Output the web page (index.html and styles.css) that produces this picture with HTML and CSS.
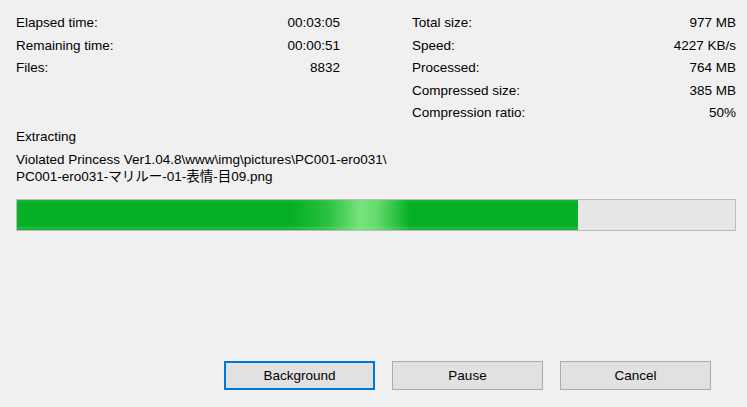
FILE: index.html
```html
<!DOCTYPE html>
<html>
<head>
<meta charset="utf-8">
<link rel="stylesheet" href="styles.css">
</head>
<body>
<div class="dialog">
  <div class="stats">
    <div class="col">
      <div class="row"><span>Elapsed time:</span><span>00:03:05</span></div>
      <div class="row"><span>Remaining time:</span><span>00:00:51</span></div>
      <div class="row"><span>Files:</span><span>8832</span></div>
    </div>
    <div class="col">
      <div class="row"><span>Total size:</span><span>977 MB</span></div>
      <div class="row"><span>Speed:</span><span>4227 KB/s</span></div>
      <div class="row"><span>Processed:</span><span>764 MB</span></div>
      <div class="row"><span>Compressed size:</span><span>385 MB</span></div>
      <div class="row"><span>Compression ratio:</span><span>50%</span></div>
    </div>
  </div>
  <div class="status">Extracting</div>
  <div class="path">Violated Princess Ver1.04.8\www\img\pictures\PC001-ero031\<br>PC001-ero031-マリルー-01-表情-目09.png</div>
  <div class="progress">
    <div class="fill" style="width: 561px"><div class="glow"></div></div>
  </div>
  <div class="buttons">
    <button class="btn focused">Background</button>
    <button class="btn">Pause</button>
    <button class="btn">Cancel</button>
  </div>
</div>
</body>
</html>
```
FILE: styles.css
```css
html, body {
  margin: 0;
  padding: 0;
  background: #f0f0f0;
}
body {
  font-family: "Liberation Sans", Arial, "Noto Sans CJK JP", sans-serif;
  font-size: 13.5px;
  color: #000;
  width: 747px;
  height: 407px;
  overflow: hidden;
}
.dialog {
  padding: 12px 11px 0 16px;
  display: flex;
  flex-direction: column;
}
.stats {
  display: grid;
  grid-template-columns: 324px 324px;
  column-gap: 72px;
}
.row {
  display: flex;
  justify-content: space-between;
  height: 22.5px;
  line-height: 22.5px;
  white-space: nowrap;
}
.status {
  margin-top: 3px;
  line-height: 17px;
}
.path {
  margin-top: 6px;
  line-height: 17px;
  white-space: nowrap;
}
.progress {
  margin-top: 14.5px;
  width: 718px;
  height: 30px;
  border: 1px solid #bcbcbc;
  background: #e6e6e6;
  position: relative;
  overflow: hidden;
}
.fill {
  height: 100%;
  background: linear-gradient(to bottom, #19b535 0px, #06b025 3px, #06b025 26px, #2fbd48 28px, #06b025 30px);
  position: relative;
}
.glow {
  position: absolute;
  top: 0;
  bottom: 0;
  left: 275px;
  width: 118px;
  background: linear-gradient(to right, rgba(120,230,120,0) 0%, rgba(120,230,120,0.3) 30%, rgba(140,235,140,0.85) 58%, rgba(140,235,140,0.7) 72%, rgba(120,230,120,0) 100%);
}
.buttons {
  margin-top: 130px;
  display: flex;
  justify-content: flex-end;
  gap: 17px;
  padding-right: 25px;
}
.btn {
  width: 151px;
  height: 29px;
  box-sizing: border-box;
  background: #e1e1e1;
  border: 1px solid #adadad;
  font-family: "Liberation Sans", Arial, sans-serif;
  font-size: 13.5px;
  color: #000;
  padding: 0;
  margin: 0;
  border-radius: 0;
}
.btn.focused {
  border: 2px solid #0078d7;
}
```
